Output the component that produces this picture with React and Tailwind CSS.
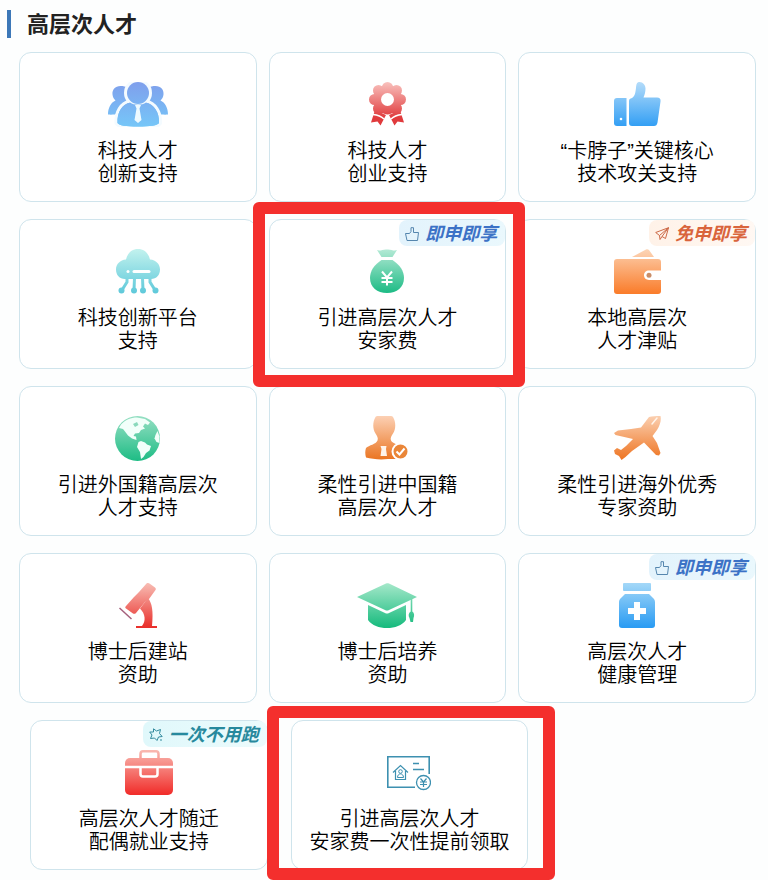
import React from "react";

// Vertical gradient shared by the card icons
function Fade({ id, from, to, height = 44 }) {
  return (
    <defs>
      <linearGradient id={id} gradientUnits="userSpaceOnUse" x1="0" y1="0" x2="0" y2={height}>
        <stop offset="0" stopColor={from} />
        <stop offset="1" stopColor={to} />
      </linearGradient>
    </defs>
  );
}

function TeamIcon() {
  return (
    <svg width="60" height="45" viewBox="0 0 60 45" aria-hidden="true">
      <Fade id="team" from="#7f9fec" to="#76c6f8" />
      <g fill="url(#team)">
        <path d="M12.500 4C7 4 4 8 4.500 12.500C4.700 15 6 17 7.500 18.500C3 20.500 0 26 0 32.500C3 32.800 5 32.500 7 32.500L20 22V6C18 4.500 15 4 12.500 4Z" />
        <path d="M47.500 4C53 4 56 8 55.500 12.500C55.300 15 54 17 52.500 18.500C57 20.500 60 26 60 32.500C57 32.800 55 32.500 53 32.500L40 22V6C42 4.500 45 4 47.500 4Z" />
      </g>
      <g fill="url(#team)" stroke="#f4fbff" strokeWidth="6" paintOrder="stroke">
        <path d="M9.500 41C9 30 14 22.500 22 20.500C26 23.500 34 23.500 38 20.500C46 22.500 51.500 30 51 41C50 43.500 42 44.500 30 44.500S10.500 43.500 9.500 41Z" />
        <circle cx="30" cy="11" r="11" />
      </g>
      <path d="M9.500 41C9 30 14 22.500 22 20.500C26 23.500 34 23.500 38 20.500C46 22.500 51.500 30 51 41C50 43.500 42 44.500 30 44.500S10.500 43.500 9.500 41Z" fill="url(#team)" />
      <path d="M27 23h6l-1.500 3.500L33.500 38L30 41L26.500 38L28.500 26.500Z" fill="#eefaff" />
    </svg>
  );
}

function RosetteIcon() {
  return (
    <svg width="37" height="44" viewBox="0 0 37 44" aria-hidden="true">
      <Fade id="rosette" from="#f9c2be" to="#e03a3c" height={36} />
      <g fill="url(#rosette)">
        <path d="M6 28L17 33L11.500 43.500L8.500 39.500L2 40.500Z" />
        <path d="M31 28L20 33L25.500 43.500L28.500 39.500L35 40.500Z" />
      </g>
      <path d="M4 32.500C9 33 12 34 15 37M33 32.500C28 33 25 34 22 37" stroke="#fff" strokeWidth="1.500" fill="none" />
      <g fill="url(#rosette)">
        <circle cx="18.500" cy="17.500" r="14.500" />
        <circle cx="18.500" cy="5.500" r="5.500" />
        <circle cx="27.500" cy="8.500" r="5.500" />
        <circle cx="31.500" cy="17.500" r="5.500" />
        <circle cx="27.500" cy="26.500" r="5.500" />
        <circle cx="18.500" cy="28" r="4.500" />
        <circle cx="9.500" cy="26.500" r="5.500" />
        <circle cx="5.500" cy="17.500" r="5.500" />
        <circle cx="9.500" cy="8.500" r="5.500" />
      </g>
      <circle cx="18.500" cy="17.500" r="6.500" fill="#fff" />
    </svg>
  );
}

function ThumbIcon() {
  return (
    <svg width="47" height="44" viewBox="0 0 47 44" aria-hidden="true">
      <Fade id="thumb" from="#b4dcfa" to="#339ff4" />
      <g fill="url(#thumb)">
        <path d="M3 16H12.500V44H3C1 44 0 43 0 41V19C0 17 1 16 3 16Z" />
        <path d="M15 19C15 17 16 16.500 18 16C21 14.500 21.500 10 22 6C22.300 2 23 0 25.500 0C29 0 31.500 3 31.500 6.500C31.500 10 30.500 13 29.500 15.500H43C45.500 15.500 47 17 46.500 19.500L43.500 40.500C43 43 42 44 40 44H18C16 44 15 43 15 41Z" />
      </g>
      <circle cx="7" cy="37" r="1.300" fill="#fff" />
    </svg>
  );
}

function CloudIcon() {
  return (
    <svg width="44" height="45" viewBox="0 0 44 45" aria-hidden="true">
      <Fade id="cloud" from="#c2f2ee" to="#5fc9da" />
      <g fill="url(#cloud)">
        <path d="M9 30C3.500 30 0 26 0 20.500C0 15 4 11 10 10.500C11.500 4 16 0 22 0S32.500 4 34 10.500C40 11 44 15 44 20.500C44 26 40.500 30 35 30Z" />
        <circle cx="5.500" cy="41.500" r="3" />
        <circle cx="18" cy="41.500" r="3" />
        <circle cx="27" cy="41.500" r="3" />
        <circle cx="39.500" cy="41.500" r="3" />
      </g>
      <path d="M11 29V33L6 41M18.500 29L18 41M26.500 29L27 41M34 29V33L39 41" stroke="url(#cloud)" strokeWidth="3" fill="none" />
      <circle cx="12" cy="22.500" r="1.500" fill="#fff" />
      <path d="M18 22.500H33" stroke="#fff" strokeWidth="3" strokeLinecap="round" />
    </svg>
  );
}

function MoneyBagIcon() {
  return (
    <svg width="34" height="44" viewBox="0 0 34 44" aria-hidden="true">
      <Fade id="bag" from="#b5ead6" to="#1dbb85" />
      <g fill="url(#bag)">
        <path d="M7 1C10 2.500 13 0 17 0.500C21 0 24 2.500 27 1L22.500 8H11.500Z" />
        <path d="M11.500 11H22.500C30 16 34 22 34 29C34 38 27 44 17 44S0 38 0 29C0 22 4 16 11.500 11Z" />
      </g>
      <path d="M12 22.500L17 28.500L22 22.500M17 28.500V36.500M11.500 29H22.500M11.500 33H22.500" stroke="#fff" strokeWidth="2" fill="none" />
    </svg>
  );
}

function WalletIcon() {
  return (
    <svg width="47" height="45" viewBox="0 0 47 45" aria-hidden="true">
      <Fade id="wallet" from="#fcd0ae" to="#fa7d2c" />
      <path d="M18 8L32 0.500C33 0 34 0 35 1L40 8Z" fill="url(#wallet)" opacity="0.900" />
      <path d="M3 10H44C46 10 47 11 47 13V42C47 44 46 45 44 45H3C1 45 0 44 0 42V13C0 11 1 10 3 10Z" fill="url(#wallet)" />
      <path d="M47 21.500H35C32 21.500 30 23.500 30 26.300S32 31 35 31H47Z" fill="#fff" />
      <circle cx="35" cy="26.300" r="2.500" fill="#c98d68" />
    </svg>
  );
}

function GlobeIcon() {
  return (
    <svg width="45" height="45" viewBox="0 0 45 45" aria-hidden="true">
      <Fade id="globe" from="#96dfc3" to="#20bd86" />
      <circle cx="22.500" cy="22.500" r="22.500" fill="url(#globe)" />
      <g fill="#f2fffa">
        <path d="M6 8.500C10 4 16 1.500 22 1.500L30 3L35 6.500L33 9L30 7.500L28 10.500L30 12.500L26 14L24 17L20 17.500L18.500 20L21 20.500L21.500 24L17 22.500L13 19.500L10 15.500L8 13L4 12Z" />
        <path d="M23.500 26L26 25L30 26.500L32 28.500L36 30L34.500 34.500L31 37L28.500 41L26 43L25 36L22 31Z" />
        <path d="M42.500 15L44.500 20.500V27L41.500 26L39.500 22.500L40.500 19Z" />
      </g>
      <path d="M18 8L22 6L23.500 9L20 11Z" fill="#8ad9bc" />
    </svg>
  );
}

function PersonCheckIcon() {
  return (
    <svg width="44" height="44" viewBox="0 0 44 44" aria-hidden="true">
      <Fade id="person" from="#fcd0b4" to="#ea7420" />
      <path d="M10.500 1C11 0.300 12 0 13 0H25.500C26.500 0 27.500 0.300 28 1C31 6 31 13 28 17.500C26.500 20 25 22 26 24.500C28 28 33 28 36 31V43H23C15 44 7 43 1 41.500C0 38 0 35 1 32C4 29 11 28.500 12.500 24.500C13.500 22 12 20 10.500 17.500C7.500 13 7.500 6 10.500 1Z" fill="url(#person)" />
      <path d="M15.500 30H21.500L21 33L22 40H15.500L16.500 33Z" fill="#fff4ea" />
      <circle cx="35.500" cy="35.500" r="8" fill="#ea8638" stroke="#fff" strokeWidth="2" />
      <path d="M31.500 35.500L34.500 38.500L39.500 32.500" stroke="#fff" strokeWidth="2" fill="none" />
    </svg>
  );
}

function PlaneIcon() {
  return (
    <svg width="47" height="44" viewBox="0 0 47 44" aria-hidden="true">
      <Fade id="plane" from="#fbcfb0" to="#ee7421" />
      <path d="M35 1C38 0 42 0 46.500 0C47.500 4 46 9 43 14L38.500 20L43 27L46.500 37L45 39.500L42 39L30 26.500L18 35L11.500 41L7.500 44L5 40L1 38L0 34.500L3 32L7 34L12 30L19 23L1.500 19L0 17L4 14.500L17 13L27 11.500Z" fill="url(#plane)" />
      <path d="M38 8L43 2" stroke="#fff4ea" strokeWidth="1.500" strokeLinecap="round" />
    </svg>
  );
}

function MicroscopeIcon() {
  return (
    <svg width="38" height="45" viewBox="0 0 38 45" aria-hidden="true">
      <Fade id="scope" from="#f8bdb4" to="#e9302c" />
      <g fill="url(#scope)">
        <path d="M27.500 0.500C28.500 -0.500 29.500 0 30.500 0.500L36 4.500C37 5.500 37 6 36.500 7L30 16L26 19L17 30C16 31 15 31 14 30.500L7 25.500C6 25 6 24 7 23L15 14L20 9Z" />
        <path d="M29 15C33 20 34.500 28 33 43H23C27 38 26.500 31 21 25.500Z" />
        <path d="M17 43H38V45H17Z" />
      </g>
      <path d="M0.500 25L12.500 36" stroke="#a5607c" strokeWidth="1.500" />
    </svg>
  );
}

function GraduationIcon() {
  return (
    <svg width="60" height="45" viewBox="0 0 60 45" aria-hidden="true">
      <Fade id="grad" from="#a5e8ca" to="#18bb7e" />
      <g fill="url(#grad)">
        <path d="M29 0.500C30 0 31 0 32 0.500L60 14L32 27C30.500 27.800 29.500 27.800 28 27L0 14Z" />
        <path d="M11 22L28 30C29.500 30.700 30.500 30.700 32 30L49 22V37C45 42.500 38 45 30 45S15 42.500 11 37Z" />
        <path d="M53.700 16H55.300V28.500C57.500 30 57.500 33 56.500 35L56 39H53.500L52.500 35C51 33 51.500 30 53.700 28.500Z" />
      </g>
    </svg>
  );
}

function MedicineIcon() {
  return (
    <svg width="36" height="45" viewBox="0 0 36 45" aria-hidden="true">
      <Fade id="medicine" from="#a4d8f8" to="#2b9cf3" />
      <g fill="url(#medicine)">
        <rect x="4" y="0" width="28" height="8" rx="1" />
        <path d="M6 11H30L35 16C35.700 17 36 18 36 19V42C36 44 35 45 33 45H3C1 45 0 44 0 42V19C0 18 0.300 17 1 16Z" />
      </g>
      <path d="M15 19H21V25H27V31H21V37H15V31H9V25H15Z" fill="#fff" />
    </svg>
  );
}

function BriefcaseIcon() {
  return (
    <svg width="48" height="45" viewBox="0 0 48 45" aria-hidden="true">
      <Fade id="case" from="#f9bab2" to="#f12e2b" />
      <path d="M15.500 9V4C15.500 2 16.500 1.300 18 1.300H31C32.500 1.300 33.500 2 33.500 4V9" stroke="url(#case)" strokeWidth="2.500" fill="none" />
      <rect x="0" y="8" width="48" height="37" rx="5" fill="url(#case)" />
      <path d="M0 17H48M15.500 17V24C15.500 25.500 16.500 26.500 18 26.500H30C31.500 26.500 32.500 25.500 32.500 24V17" stroke="#fff" strokeWidth="2.500" fill="none" />
    </svg>
  );
}

function CertificateIcon() {
  return (
    <svg width="44" height="46" viewBox="0 0 44 46" fill="none" stroke="#3d90b0" aria-hidden="true">
      <path d="M28 37.300H0.800V6.800H42.200V24" strokeWidth="1.600" />
      <path d="M26 13.500H32M26 19.500H37" strokeWidth="1.600" />
      <path d="M6 22.500L13.500 15.500L21 22.500M8.500 21V29.500H18.500V21" strokeWidth="1.200" />
      <circle cx="13.500" cy="21.500" r="1.800" />
      <path d="M10.500 27.500C10.500 22.700 16.500 22.700 16.500 27.500Z" />
      <circle cx="36.500" cy="32.500" r="7" strokeWidth="1.300" />
      <path d="M33.500 28.500L36.500 32L39.500 28.500M36.500 32V37M33 32H40M33 34.500H40" strokeWidth="1.200" />
    </svg>
  );
}

function SmallThumb() {
  return (
    <svg width="14" height="14" viewBox="0 0 14 14" fill="none" stroke="#5586ae" aria-hidden="true">
      <path d="M0.500 6.500H4.500L6 4.500V0.700H8.500V5.500H13.500L12.500 13.500H2Z" />
    </svg>
  );
}

function SmallPlane() {
  return (
    <svg width="14" height="14" viewBox="0 0 14 14" fill="none" stroke="#cc6947" aria-hidden="true">
      <path d="M13.500 0.700L0.700 5.500L4.500 8.500L13.500 0.700L10.500 11.500L7 9.500L5 12.500L4.500 8.500M13.500 0.700L7 9.500" />
    </svg>
  );
}

function SmallStar() {
  return (
    <svg width="14" height="14" viewBox="0 0 14 14" fill="none" stroke="#338a9e" aria-hidden="true">
      <path d="M4.500 0.800L7.500 3L11.500 1.500L10.500 5.500L13.200 8.500L9.500 9L8 12.500L5.500 10L1.500 10.500L3 7L0.700 4L4.500 4ZM11 12H13" />
    </svg>
  );
}

const BADGES = {
  instant: {
    text: "即申即享",
    icon: SmallThumb,
    style: "text-[#3c72c6] bg-linear-to-r from-[#e3f3fc] to-[#eaf8fd]",
  },
  exempt: {
    text: "免申即享",
    icon: SmallPlane,
    style: "text-[#d9643c] bg-linear-to-r from-[#fff2e8] to-[#fff8f3]",
  },
  onestop: {
    text: "一次不用跑",
    icon: SmallStar,
    style: "text-[#27899d] bg-linear-to-r from-[#e0f8fb] to-[#ecfbfc]",
  },
};

const SERVICES = [
  { lines: ["科技人才", "创新支持"], icon: TeamIcon },
  { lines: ["科技人才", "创业支持"], icon: RosetteIcon },
  { lines: ["“卡脖子”关键核心", "技术攻关支持"], icon: ThumbIcon },
  { lines: ["科技创新平台", "支持"], icon: CloudIcon },
  {
    lines: ["引进高层次人才", "安家费"],
    icon: MoneyBagIcon,
    badge: "instant",
    frame: "-top-[18px] -bottom-[19px] -left-[17px] -right-5",
  },
  { lines: ["本地高层次", "人才津贴"], icon: WalletIcon, badge: "exempt" },
  { lines: ["引进外国籍高层次", "人才支持"], icon: GlobeIcon },
  { lines: ["柔性引进中国籍", "高层次人才"], icon: PersonCheckIcon },
  { lines: ["柔性引进海外优秀", "专家资助"], icon: PlaneIcon },
  { lines: ["博士后建站", "资助"], icon: MicroscopeIcon },
  { lines: ["博士后培养", "资助"], icon: GraduationIcon },
  { lines: ["高层次人才", "健康管理"], icon: MedicineIcon, badge: "instant" },
];

const MORE_SERVICES = [
  { lines: ["高层次人才随迁", "配偶就业支持"], icon: BriefcaseIcon, badge: "onestop" },
  {
    lines: ["引进高层次人才", "安家费一次性提前领取"],
    icon: CertificateIcon,
    frame: "-top-[15px] -bottom-[11px] -left-[25px] -right-7",
  },
];

function Badge({ type }) {
  const { text, icon: Icon, style } = BADGES[type];
  return (
    <span className={`absolute top-0 right-0 flex h-[26px] items-center gap-1.5 rounded-lg pt-0.5 pr-2 pl-1.5 text-lg leading-6 font-bold italic ${style}`}>
      <Icon />
      {text}
    </span>
  );
}

function ServiceCard({ service, className = "" }) {
  const { lines, icon: Icon, badge, frame } = service;
  return (
    <a
      href="#"
      className={`relative flex min-h-[150px] flex-col items-center rounded-xl border border-[#cfe4ec] bg-white pt-[29px] pb-3 text-center ${className}`}
    >
      {badge && <Badge type={badge} />}
      <span className="flex h-11 items-start">
        <Icon />
      </span>
      <span className="mt-3.5 text-xl leading-[23px] font-[350] text-black">
        {lines[0]}
        <br />
        {lines[1]}
      </span>
      {/* red highlight around the card */}
      {frame && (
        <span className={`pointer-events-none absolute z-10 rounded-md border-12 border-[#f42f2d] ${frame}`} />
      )}
    </a>
  );
}

export default function App() {
  return (
    <main
      lang="zh-CN"
      className="min-h-screen overflow-hidden bg-[#fdfefe] pt-2.5 pr-3 pb-2.5 pl-[19px] font-['Liberation_Sans','Noto_Sans_CJK_SC',sans-serif]"
    >
      <h1 className="-ml-3 flex h-7 items-center border-l-4 border-[#3d78b8] pt-0.5 pl-4 text-[22px] leading-7 font-bold text-[#222]">
        高层次人才
      </h1>

      <div className="mt-3.5 grid grid-cols-3 gap-x-3 gap-y-[17px]">
        {SERVICES.map((service) => (
          <ServiceCard key={service.lines.join("")} service={service} />
        ))}
      </div>

      <div className="mt-[17px] flex gap-[23px] pl-[11px]">
        {MORE_SERVICES.map((service) => (
          <ServiceCard
            key={service.lines.join("")}
            service={service}
            className="w-[calc((100%-13px)/3)]"
          />
        ))}
      </div>
    </main>
  );
}
